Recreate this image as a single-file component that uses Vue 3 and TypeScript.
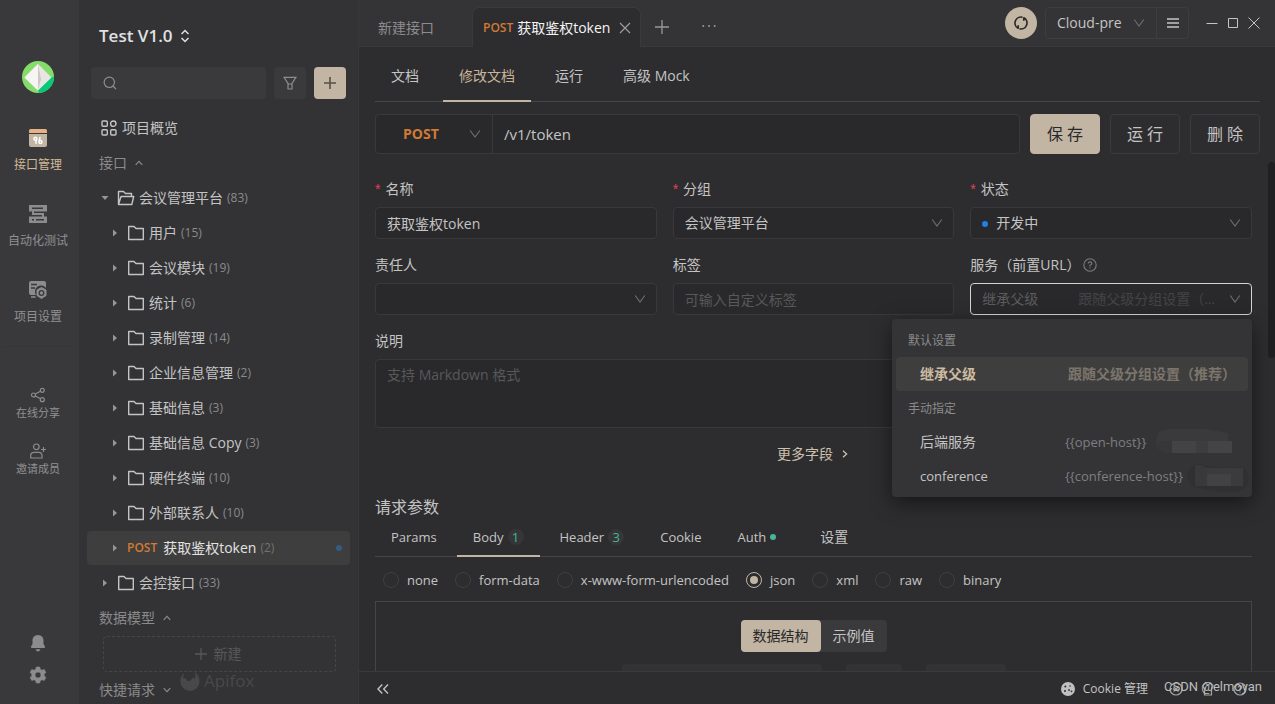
<script setup lang="ts">
import { ref } from 'vue'

interface TreeItem {
  name: string
  count: number
  level: number
  open?: boolean
  method?: string
}

const tree: TreeItem[] = [
  { name: '会议管理平台', count: 83, level: 0, open: true },
  { name: '用户', count: 15, level: 1 },
  { name: '会议模块', count: 19, level: 1 },
  { name: '统计', count: 6, level: 1 },
  { name: '录制管理', count: 14, level: 1 },
  { name: '企业信息管理', count: 2, level: 1 },
  { name: '基础信息', count: 3, level: 1 },
  { name: '基础信息 Copy', count: 3, level: 1 },
  { name: '硬件终端', count: 10, level: 1 },
  { name: '外部联系人', count: 10, level: 1 },
  { name: '获取鉴权token', count: 2, level: 1, method: 'POST' },
  { name: '会控接口', count: 33, level: 0 },
]

const pageTabs = ['文档', '修改文档', '运行', '高级 Mock']
const activePage = ref('修改文档')

interface ParamTab {
  name: string
  latin: boolean
  badge?: number
  dot?: boolean
}
const paramTabs: ParamTab[] = [
  { name: 'Params', latin: true },
  { name: 'Body', latin: true, badge: 1 },
  { name: 'Header', latin: true, badge: 3 },
  { name: 'Cookie', latin: true },
  { name: 'Auth', latin: true, dot: true },
  { name: '设置', latin: false },
]
const activeParam = ref('Body')

const bodyTypes = ['none', 'form-data', 'x-www-form-urlencoded', 'json', 'xml', 'raw', 'binary']
const bodyType = ref('json')

const path = ref('/v1/token')
const apiName = ref('获取鉴权token')
const tags = ref('')
const description = ref('')
const keyword = ref('')
const view = ref('数据结构')
</script>

<template>
  <div class="app">
    <nav class="rail" aria-label="主导航">
      <svg class="logo" viewBox="0 0 32 32" aria-hidden="true">
        <circle cx="16" cy="16" r="16" fill="#86dc6b" />
        <path d="M32 16A16 16 0 0 1 17 32L16 29.500L29.500 16Z" fill="#05c878" />
        <path d="M16 3L29.500 16.500L16 29.500L2.500 16.500Z" fill="#e8e6e4" />
        <path d="M16 3V29.500L2.500 16.500Z" fill="#f6f5f4" />
        <path d="M16 3L19 18L16 29.500Z" fill="#cdc8c4" />
      </svg>
      <button class="rail-item active" type="button">
        <svg width="18" height="18" viewBox="0 0 18 18" aria-hidden="true">
          <path d="M1.500 0H16.500Q18 0 18 1.500V4H0V1.500Q0 0 1.500 0Z" fill="#e6b184" />
          <path d="M0 5H18V16Q18 18 16 18H2Q0 18 0 16Z" fill="#c2b5a3" />
          <g fill="none" stroke="#fff" stroke-width="1.500" stroke-linecap="round">
            <circle cx="6.400" cy="9.800" r="1.500" /><path d="M7 11.300V14.300" />
            <circle cx="11.400" cy="12.900" r="1.500" /><path d="M10.200 11.900L11 8.500" />
          </g>
        </svg>
        <span>接口管理</span>
      </button>
      <button class="rail-item" type="button">
        <svg width="18" height="18" viewBox="0 0 18 18" aria-hidden="true">
          <path d="M0 0H18V6.500H5V8H15V11.500H18V18H0V11.500H13V10H3V6.500H0Z" fill="#8c8c8e" />
          <path d="M3 3.200H14M3 14.800H5M7 14.800H15" stroke="#39393b" stroke-width="1.600" />
        </svg>
        <span>自动化测试</span>
      </button>
      <button class="rail-item" type="button">
        <svg width="18" height="18" viewBox="0 0 18 18" aria-hidden="true">
          <path d="M2 0H15Q17 0 17 2V7A6 6 0 0 0 7 14H2Q0 14 0 12V2Q0 0 2 0Z" fill="#8c8c8e" />
          <path d="M2 3.500H8M2 7H6" stroke="#39393b" stroke-width="1.300" />
          <path d="M2 16H6.500" stroke="#8c8c8e" stroke-width="1.600" />
          <path d="M12.500 6.500L17 9V14.500L12.500 17.500L8 14.500V9Z" fill="#8c8c8e" stroke="#8c8c8e" stroke-width="1" stroke-linejoin="round" />
          <circle cx="12.500" cy="12" r="2.300" fill="none" stroke="#39393b" stroke-width="1.300" />
        </svg>
        <span>项目设置</span>
      </button>
      <hr class="rail-line" />
      <button class="rail-item small" type="button">
        <svg width="16" height="16" viewBox="0 0 16 16" fill="none" stroke="#8c8c8e" stroke-width="1.200" aria-hidden="true">
          <circle cx="3.500" cy="8" r="2" /><circle cx="12.300" cy="3.300" r="2" /><circle cx="12.300" cy="12.700" r="2" />
          <path d="M5.300 7L10.500 4.300M5.300 9L10.500 11.700" />
        </svg>
        <span>在线分享</span>
      </button>
      <button class="rail-item small" type="button">
        <svg width="16" height="16" viewBox="0 0 16 16" fill="none" stroke="#8c8c8e" stroke-width="1.200" aria-hidden="true">
          <circle cx="6.300" cy="3.800" r="2.800" />
          <path d="M.7 15V12.500Q.7 9.300 4 9.300H9Q12 9.300 12 12.500V15Z" /><path d="M13.500 4V9M11 6.500H16" />
        </svg>
        <span>邀请成员</span>
      </button>
      <div class="rail-bottom">
        <button class="bare" type="button" aria-label="通知">
          <svg width="16" height="18" viewBox="0 0 16 18" fill="#8c8c8e" aria-hidden="true">
            <path d="M8 1C4.300 1 2.500 3.800 2.500 6.500V10L1 12.500Q.6 14 2 14H14Q15.400 14 15 12.500L13.500 10V6.500C13.500 3.800 11.700 1 8 1Z" />
            <path d="M5.500 15.200H10.500Q9.500 17.500 8 17.500T5.500 15.200Z" />
          </svg>
        </button>
        <button class="bare" type="button" aria-label="设置">
          <svg width="18" height="18" viewBox="0 0 18 18" aria-hidden="true">
            <path fill="#8c8c8e" fill-rule="evenodd" d="M7.300 1H10.700L11.300 3.300L12.900 4.200L15.200 3.500L16.900 6.500L15.200 8.100V9.900L16.900 11.500L15.200 14.500L12.900 13.800L11.300 14.700L10.700 17H7.300L6.700 14.700L5.100 13.800L2.800 14.500L1.100 11.500L2.800 9.900V8.100L1.100 6.500L2.800 3.500L5.100 4.200L6.700 3.300ZM9 6A3 3 0 1 0 9 12A3 3 0 1 0 9 6Z" stroke="#8c8c8e" stroke-width=".6" stroke-linejoin="round" />
          </svg>
        </button>
      </div>
    </nav>

    <aside class="panel">
      <button class="project" type="button">
        <span>Test V1.0</span>
        <svg width="10" height="14" viewBox="0 0 10 14" fill="none" stroke="currentColor" stroke-width="1.500" aria-hidden="true">
          <path d="M1.500 5L5 1.500L8.500 5M1.500 9L5 12.500L8.500 9" />
        </svg>
      </button>
      <div class="search-row">
        <label class="search">
          <svg width="14" height="14" viewBox="0 0 14 14" fill="none" stroke="#8e8e90" stroke-width="1.200" aria-hidden="true">
            <circle cx="6.300" cy="6.300" r="5.200" /><path d="M10 10L13 13.200" />
          </svg>
          <input v-model="keyword" type="text" aria-label="搜索" />
        </label>
        <button class="square" type="button" aria-label="筛选">
          <svg width="14" height="14" viewBox="0 0 14 14" fill="none" stroke="#8e8e90" stroke-width="1.200" aria-hidden="true">
            <path d="M1 1.300H13L9 7.500V13H5V7.500ZM5 8H9" />
          </svg>
        </button>
        <button class="square primary" type="button" aria-label="新增">
          <svg width="14" height="14" viewBox="0 0 14 14" stroke="#55504a" stroke-width="1.600" aria-hidden="true"><path d="M7 1V13M1 7H13" /></svg>
        </button>
      </div>
      <a class="overview" href="#overview">
        <svg width="16" height="16" viewBox="0 0 16 16" fill="none" stroke="currentColor" stroke-width="1.400" aria-hidden="true">
          <rect x="1" y="1" width="5.300" height="5.300" rx="1" /><circle cx="12.300" cy="3.700" r="2.700" />
          <rect x="1" y="9.700" width="5.300" height="5.300" rx="1" /><rect x="9.700" y="9.700" width="5.300" height="5.300" rx="1" />
        </svg>
        <span>项目概览</span>
      </a>
      <button class="section" type="button">
        <span>接口</span>
        <svg width="8" height="6" viewBox="0 0 8 6" fill="none" stroke="currentColor" stroke-width="1.200" aria-hidden="true"><path d="M.7 4.800L4 1.400L7.300 4.800" /></svg>
      </button>
      <ul class="tree">
        <li
          v-for="item in tree"
          :key="item.name"
          class="node"
          :class="{ nested: item.level === 1, selected: item.method }"
        >
          <svg class="caret" :class="{ open: item.open }" width="8" height="8" viewBox="0 0 8 8" fill="#969698" aria-hidden="true"><path d="M2 .5L6 4L2 7.500Z" /></svg>
          <span v-if="item.method" class="method">{{ item.method }}</span>
          <svg v-else-if="item.open" class="folder" width="18" height="16" viewBox="0 0 18 16" fill="none" stroke="currentColor" stroke-width="1.400" stroke-linejoin="round" aria-hidden="true">
            <path d="M1.500 14.500V1.500H6.500L8.500 3.500H14.500V6M1.500 14.500L4 6.500H16.700L14.800 14.500Z" />
          </svg>
          <svg v-else class="folder" width="18" height="16" viewBox="0 0 18 16" fill="none" stroke="currentColor" stroke-width="1.400" stroke-linejoin="round" aria-hidden="true">
            <path d="M1.700 14.500V1.500H7L9 3.500H16.300V14.500Z" />
          </svg>
          <span class="node-name">{{ item.name }}</span>
          <span class="count">({{ item.count }})</span>
          <i v-if="item.method" class="unsaved"></i>
        </li>
      </ul>
      <button class="section" type="button">
        <span>数据模型</span>
        <svg width="8" height="6" viewBox="0 0 8 6" fill="none" stroke="currentColor" stroke-width="1.200" aria-hidden="true"><path d="M.7 4.800L4 1.400L7.300 4.800" /></svg>
      </button>
      <button class="create" type="button">
        <svg width="12" height="12" viewBox="0 0 12 12" stroke="currentColor" stroke-width="1.300" aria-hidden="true"><path d="M6 0V12M0 6H12" /></svg>
        <span>新建</span>
      </button>
      <button class="section" type="button">
        <span>快捷请求</span>
        <svg width="8" height="6" viewBox="0 0 8 6" fill="none" stroke="currentColor" stroke-width="1.200" aria-hidden="true"><path d="M.7 1.200L4 4.600L7.300 1.200" /></svg>
      </button>
      <div class="brand">
        <svg width="20" height="20" viewBox="0 0 20 20" fill="currentColor" aria-hidden="true">
          <path d="M4 2Q0 6 .5 11A9.500 9 0 0 0 19.500 11Q19.500 5 15 1Q16 5 14.500 8L12.500 6.500Q11 10 8.500 10Q6 10 6 7L3.500 8Q3 5 4 2Z" />
        </svg>
        <span>Apifox</span>
      </div>
    </aside>

    <main class="main">
      <header class="topbar">
        <button class="doc-tab" type="button">新建接口</button>
        <div class="doc-tab current">
          <span class="method">POST</span>
          <span class="doc-name">获取鉴权token</span>
          <button class="bare" type="button" aria-label="关闭标签">
            <svg width="12" height="12" viewBox="0 0 12 12" stroke="#9c9c9e" stroke-width="1.200" aria-hidden="true"><path d="M1 1L11 11M11 1L1 11" /></svg>
          </button>
        </div>
        <button class="bare add-tab" type="button" aria-label="新建标签">
          <svg width="14" height="14" viewBox="0 0 14 14" stroke="#98989a" stroke-width="1.300" aria-hidden="true"><path d="M7 0V14M0 7H14" /></svg>
        </button>
        <button class="bare" type="button" aria-label="更多标签">
          <svg width="14" height="4" viewBox="0 0 14 4" fill="#98989a" aria-hidden="true"><circle cx="1.300" cy="2" r="1" /><circle cx="7" cy="2" r="1" /><circle cx="12.700" cy="2" r="1" /></svg>
        </button>
        <div class="top-right">
          <button class="sync" type="button" aria-label="同步">
            <svg width="16" height="16" viewBox="0 0 16 16" fill="none" stroke="#2a2826" stroke-width="1.700" aria-hidden="true">
              <path d="M5 13.200A6 6 0 0 1 9.500 2.200M5.200 13.800V10.300M11 2.800A6 6 0 0 1 6.500 13.800M10.800 2.200V5.700" />
            </svg>
          </button>
          <div class="env">
            <span class="select-wrap env-select">
              <select aria-label="环境"><option>Cloud-pre</option></select>
              <svg class="arrow" width="12" height="8" viewBox="0 0 12 8" aria-hidden="true"><path d="M1.200 .5L6 7L10.800 .5" /></svg>
            </span>
            <button class="env-menu" type="button" aria-label="环境管理">
              <svg width="12" height="10" viewBox="0 0 12 10" stroke="#c4c4c4" stroke-width="1.300" aria-hidden="true"><path d="M0 1H12M0 5H12M0 9H12" /></svg>
            </button>
          </div>
          <div class="window-buttons">
            <button class="bare" type="button" aria-label="最小化"><svg width="12" height="12" viewBox="0 0 12 12" aria-hidden="true"><path d="M.5 6.500H11.500" /></svg></button>
            <button class="bare" type="button" aria-label="最大化"><svg width="12" height="12" viewBox="0 0 12 12" aria-hidden="true"><path d="M1.500 1.500H10.500V10.500H1.500Z" /></svg></button>
            <button class="bare" type="button" aria-label="关闭"><svg width="12" height="12" viewBox="0 0 12 12" aria-hidden="true"><path d="M.5 .5L11.500 11.500M11.500 .5L.5 11.500" /></svg></button>
          </div>
        </div>
      </header>

      <div class="page-head">
        <nav class="page-tabs">
          <button
            v-for="tab in pageTabs"
            :key="tab"
            type="button"
            :class="{ active: tab === activePage }"
            @click="activePage = tab"
          >{{ tab }}</button>
        </nav>
        <div class="request-row">
          <div class="request">
            <span class="select-wrap request-method">
              <select aria-label="请求方法"><option>POST</option></select>
              <svg class="arrow" width="12" height="8" viewBox="0 0 12 8" aria-hidden="true"><path d="M1.200 .5L6 7L10.800 .5" /></svg>
            </span>
            <input v-model="path" type="text" aria-label="接口路径" />
          </div>
          <button class="action primary" type="button">保 存</button>
          <button class="action" type="button">运 行</button>
          <button class="action" type="button">删 除</button>
        </div>
      </div>

      <div class="scroll">
        <i class="scrollbar"></i>
        <form class="form" @submit.prevent>
          <div class="field">
            <label for="f-name"><em>*</em>名称</label>
            <input id="f-name" v-model="apiName" type="text" />
          </div>
          <div class="field">
            <label for="f-group"><em>*</em>分组</label>
            <span class="select-wrap">
              <select id="f-group"><option>会议管理平台</option></select>
              <svg class="arrow" width="12" height="8" viewBox="0 0 12 8" aria-hidden="true"><path d="M1.200 .5L6 7L10.800 .5" /></svg>
            </span>
          </div>
          <div class="field">
            <label for="f-status"><em>*</em>状态</label>
            <span class="select-wrap status">
              <i class="status-dot"></i>
              <select id="f-status"><option>开发中</option></select>
              <svg class="arrow" width="12" height="8" viewBox="0 0 12 8" aria-hidden="true"><path d="M1.200 .5L6 7L10.800 .5" /></svg>
            </span>
          </div>
          <div class="field">
            <label for="f-owner">责任人</label>
            <span class="select-wrap">
              <select id="f-owner"><option></option></select>
              <svg class="arrow" width="12" height="8" viewBox="0 0 12 8" aria-hidden="true"><path d="M1.200 .5L6 7L10.800 .5" /></svg>
            </span>
          </div>
          <div class="field">
            <label for="f-tags">标签</label>
            <input id="f-tags" v-model="tags" type="text" placeholder="可输入自定义标签" />
          </div>
          <div class="field">
            <label for="f-service">服务（前置URL）
              <svg class="help" width="14" height="14" viewBox="0 0 14 14" fill="none" stroke="#7c7c7e" stroke-width="1.100" aria-hidden="true">
                <circle cx="7" cy="7" r="6.200" /><path d="M5.200 5.600Q5.200 3.900 7 3.900T8.800 5.500Q8.800 6.500 7 7.300V8.500M7 9.400V10.500" />
              </svg>
            </label>
            <div class="service">
              <button id="f-service" class="service-box" type="button" role="combobox" aria-expanded="true" aria-controls="service-menu">
                <span class="service-name">继承父级</span>
                <span class="service-hint">跟随父级分组设置（推荐）</span>
                <svg class="chev" width="12" height="8" viewBox="0 0 12 8" aria-hidden="true"><path d="M1.200 .5L6 7L10.800 .5" /></svg>
              </button>
              <div id="service-menu" class="menu" role="listbox">
                <div class="menu-group">默认设置</div>
                <div class="option chosen" role="option" aria-selected="true"><span>继承父级</span><small>跟随父级分组设置（推荐）</small></div>
                <div class="menu-group">手动指定</div>
                <div class="option" role="option" aria-selected="false">
                  <span>后端服务</span><small v-pre class="latin">{{open-host}}</small>
                  <svg class="mosaic" width="78" height="24" viewBox="0 0 78 24" aria-hidden="true">
                    <path d="M12 0H50L72 4V24H12Q0 23 0 12T12 0Z" fill="#3a3a3c" />
                    <path d="M0 12H16V24H10Q1 22 0 12Z" fill="#373739" />
                    <path d="M16 12H40V24H16Z" fill="#434345" /><path d="M40 12H52V24H40Z" fill="#3d3d3f" /><path d="M52 12H76V24H52Z" fill="#444446" />
                  </svg>
                </div>
                <div class="option" role="option" aria-selected="false">
                  <span class="latin">conference</span><small v-pre class="latin">{{conference-host}}</small>
                  <svg class="mosaic" width="62" height="30" viewBox="0 0 62 30" aria-hidden="true">
                    <path d="M0 12Q2 2 14 1Q22 6 52 4Q62 6 62 16Q60 30 42 29Q16 28 4 22Z" fill="#303032" />
                    <path d="M8 2H14Q20 5 20 5V23H8Z" fill="#39393b" /><path d="M20 5H56V23H20Z" fill="#3b3b3d" /><path d="M20 11H44V23H20Z" fill="#424244" />
                  </svg>
                </div>
              </div>
            </div>
          </div>
          <div class="field wide">
            <label for="f-desc">说明</label>
            <textarea id="f-desc" v-model="description" placeholder="支持 Markdown 格式"></textarea>
          </div>
        </form>

        <button class="more" type="button">
          <span>更多字段</span>
          <svg width="6" height="8" viewBox="0 0 6 8" fill="none" stroke="currentColor" stroke-width="1.300" aria-hidden="true"><path d="M1 .8L4.600 4L1 7.200" /></svg>
        </button>

        <h2>请求参数</h2>
        <nav class="param-tabs">
          <button
            v-for="tab in paramTabs"
            :key="tab.name"
            type="button"
            :class="{ active: tab.name === activeParam, latin: tab.latin }"
            @click="activeParam = tab.name"
          >
            <span>{{ tab.name }}</span>
            <b v-if="tab.badge">{{ tab.badge }}</b>
            <i v-if="tab.dot"></i>
          </button>
        </nav>
        <div class="radios" role="radiogroup" aria-label="Body">
          <label v-for="type in bodyTypes" :key="type" class="latin">
            <input v-model="bodyType" type="radio" name="body-type" :value="type" />
            <span>{{ type }}</span>
          </label>
        </div>
        <section class="schema">
          <div class="segmented">
            <button v-for="v in ['数据结构', '示例值']" :key="v" type="button" :class="{ on: v === view }" @click="view = v">{{ v }}</button>
          </div>
          <div class="ghosts"><i class="g1"></i><i class="g2"></i><i class="g3"></i></div>
        </section>
      </div>

      <footer class="statusbar">
        <button class="bare" type="button" aria-label="收起侧栏">
          <svg width="12" height="10" viewBox="0 0 12 10" fill="none" stroke="#c0c0c0" stroke-width="1.400" aria-hidden="true"><path d="M5.300 .5L1 5L5.300 9.500M11 .5L6.700 5L11 9.500" /></svg>
        </button>
        <div class="status-right">
          <button class="cookie" type="button">
            <svg width="14" height="14" viewBox="0 0 14 14" aria-hidden="true">
              <circle cx="7" cy="7" r="7" fill="#c0c0c0" />
              <g fill="#2d2d2f"><circle cx="4.300" cy="4.500" r="1" /><circle cx="9" cy="4" r=".8" /><circle cx="4" cy="9" r="1" /><circle cx="8" cy="8" r=".9" /><circle cx="10.500" cy="9.300" r=".9" /></g>
            </svg>
            <span>Cookie 管理</span>
          </button>
          <div class="tools">
            <button class="bare" type="button" aria-label="运行环境">
              <svg width="14" height="14" viewBox="0 0 14 14" fill="none" stroke="#a4a4a4" stroke-width="1.200" aria-hidden="true"><circle cx="7" cy="7" r="6" /><path d="M4.500 4.500L9.500 9.500M9.500 4.500L4.500 9.500" /></svg>
            </button>
            <button class="bare" type="button" aria-label="主题">
              <svg width="14" height="14" viewBox="0 0 14 14" fill="none" stroke="#a4a4a4" stroke-width="1.200" aria-hidden="true"><path d="M4.500 1L2 3.500L2.500 6H3.500V13H10.500V6H11.500L12 3.500L9.500 1Q7 4 4.500 1Z" /></svg>
            </button>
            <button class="bare" type="button" aria-label="帮助">
              <svg width="14" height="14" viewBox="0 0 14 14" fill="none" stroke="#a4a4a4" stroke-width="1.200" aria-hidden="true"><circle cx="7" cy="7" r="6" /><path d="M5.200 5.600Q5.200 3.900 7 3.900T8.800 5.500Q8.800 6.500 7 7.300V8.500M7 9.400V10.500" /></svg>
            </button>
            <span class="signature">CSDN @elmoyan</span>
          </div>
        </div>
      </footer>
    </main>
  </div>
</template>

<style>
body {
  margin: 0;
  background: #2d2d2f;
}
</style>

<style scoped>
.app {
  display: flex;
  height: 100vh;
  overflow: hidden;
  font: 14px/22px "Open Sans", "Noto Sans CJK SC", sans-serif;
  color: #c4c4c4;
  background: #2d2d2f;
}
.app *,
.app *::before {
  box-sizing: border-box;
}
button,
input,
select,
textarea {
  font: inherit;
  color: inherit;
  margin: 0;
  outline: none;
}
button {
  padding: 0;
  border: 0;
  background: none;
  cursor: pointer;
}
svg {
  display: block;
  flex: none;
}
.bare {
  display: flex;
}

/* icon rail */
.rail {
  flex: 0 0 79px;
  display: flex;
  flex-direction: column;
  align-items: center;
  padding: 61px 3px 20px 0;
  background: #39393b;
}
.logo {
  width: 32px;
  height: 32px;
  margin-bottom: 36px;
}
.rail-item {
  display: flex;
  flex-direction: column;
  align-items: center;
  gap: 9px;
  height: 76px;
  font-size: 12px;
  line-height: 18px;
  color: #909092;
  white-space: nowrap;
}
.rail-item.active {
  color: #d2b89a;
}
.rail-item.small {
  height: 56px;
  gap: 1px;
  font-size: 11px;
}
.rail-line {
  width: 70px;
  height: 1px;
  margin: -11px 0 40px;
  border: 0;
  background: #363638;
}
.rail-bottom {
  margin-top: auto;
  display: flex;
  flex-direction: column;
  align-items: center;
  gap: 14px;
}

/* side panel */
.panel {
  position: relative;
  flex: 0 0 280px;
  display: flex;
  flex-direction: column;
  padding-top: 22px;
  background: #333335;
  border-right: 1px solid #38383a;
  overflow: hidden;
}
.project {
  display: flex;
  align-items: center;
  gap: 7px;
  margin: 0 20px 18px;
  font-size: 17px;
  font-weight: 600;
  line-height: 27px;
  color: #e0e0e0;
}
.search-row {
  display: flex;
  gap: 8px;
  margin: 0 12px 18px;
}
.search {
  flex: 1;
  display: flex;
  align-items: center;
  gap: 8px;
  height: 32px;
  padding: 0 12px;
  border-radius: 4px;
  background: #3a3a3c;
}
.search input {
  flex: 1;
  width: 0;
  border: 0;
  background: none;
}
.square {
  display: grid;
  place-items: center;
  width: 32px;
  height: 32px;
  border-radius: 4px;
  background: #3a3a3c;
}
.primary {
  background: #c2b5a3;
}
.overview {
  display: flex;
  align-items: center;
  gap: 5px;
  margin: 0 22px 13px;
  color: #c4c4c4;
  text-decoration: none;
}
.section {
  display: flex;
  align-items: center;
  gap: 8px;
  margin: 0 20px;
  color: #8a8a8c;
}
.tree {
  margin: 7px 8px 6px;
  padding: 0;
  list-style: none;
}
.node {
  display: flex;
  align-items: center;
  height: 34px;
  margin-bottom: 1px;
  padding-left: 14px;
  border-radius: 4px;
  white-space: nowrap;
}
.node.nested {
  padding-left: 24px;
}
.node.selected {
  background: #3e3e3e;
  color: #e2e2e2;
}
.caret {
  margin-right: 8px;
}
.caret.open {
  transform: rotate(90deg);
}
.folder {
  margin-right: 4px;
}
.method {
  font-size: 12px;
  font-weight: 600;
  color: #d07a35;
}
.node .method {
  margin-right: 6px;
}
.count {
  margin-left: 4px;
  font-size: 12px;
  color: #8a8a8c;
}
.selected .count {
  color: #77706a;
}
.unsaved {
  width: 6px;
  height: 6px;
  margin: 0 8px 0 auto;
  border-radius: 50%;
  background: #375a80;
}
.create {
  display: flex;
  align-items: center;
  justify-content: center;
  gap: 7px;
  height: 36px;
  margin: 7px 22px 7px 24px;
  padding-right: 3px;
  border: 1px dashed #464648;
  border-radius: 4px;
  color: #58585a;
}
.brand {
  position: absolute;
  left: 101px;
  bottom: 11px;
  display: flex;
  align-items: center;
  gap: 4px;
  font-size: 17px;
  line-height: 24px;
  color: #48484a;
}

/* main column */
.main {
  flex: 1;
  min-width: 0;
  display: flex;
  flex-direction: column;
}
.topbar {
  display: flex;
  align-items: center;
  height: 47px;
  flex: none;
  background: #343436;
  border-bottom: 1px solid #3a3a3c;
}
.doc-tab {
  width: 113px;
  padding: 10px 0 0 19px;
  text-align: left;
  color: #8c8c8e;
}
.doc-tab.current {
  display: flex;
  align-items: center;
  align-self: flex-end;
  width: auto;
  height: 40px;
  margin-bottom: -1px;
  padding: 1px 9px 0 10px;
  border: 1px solid #3a3a3c;
  border-bottom: 0;
  border-radius: 7px 7px 0 0;
  background: #2d2d2f;
}
.doc-name {
  margin: 0 9px 0 4px;
  color: #f4f4f4;
}
.add-tab {
  margin: 8px 33px 0 14px;
}
.add-tab + .bare {
  margin-top: 6px;
}
.top-right {
  margin-left: auto;
  display: flex;
  align-items: center;
  padding-right: 15px;
}
.sync {
  display: grid;
  place-items: center;
  width: 32px;
  height: 32px;
  border-radius: 50%;
  background: #c2b5a3;
}
.env {
  display: flex;
  margin: 0 17px 0 8px;
  border: 1px solid #3e3e40;
  border-radius: 4px;
}
.env-menu {
  display: grid;
  place-items: center;
  width: 32px;
  height: 30px;
  border-left: 1px solid #3e3e40;
}
.window-buttons {
  display: flex;
  gap: 9px;
}
.window-buttons svg {
  fill: none;
  stroke: #c4c4c4;
}

.select-wrap {
  position: relative;
  display: block;
}
.select-wrap select {
  display: block;
  width: 100%;
  height: 32px;
  padding: 0 30px 0 11px;
  appearance: none;
  border: 1px solid #39393b;
  border-radius: 4px;
  background: #29292b;
}
.arrow {
  position: absolute;
  right: 11px;
  top: 50%;
  margin-top: -4px;
  pointer-events: none;
}
.arrow path,
.chev path {
  fill: none;
  stroke: #6c6c6e;
  stroke-width: 1.2;
}
.env-select {
  width: 110px;
}
.env-select select {
  height: 30px;
  border: 0;
  background: none;
}

.page-head {
  flex: none;
  padding: 0 15px 8px 16px;
}
.page-tabs {
  display: flex;
  gap: 8px;
  margin-bottom: 12px;
  box-shadow: inset 0 -1px #464648;
}
.page-tabs button {
  padding: 18px 16px 13px;
  border-bottom: 2px solid transparent;
}
.page-tabs .active {
  color: #c8b597;
  border-color: #c2b5a3;
}
.request-row {
  display: flex;
  gap: 10px;
}
.request {
  flex: 1;
  display: flex;
  height: 40px;
  border: 1px solid #39393b;
  border-radius: 4px;
  background: #29292b;
}
.request-method {
  width: 117px;
  border-right: 1px solid #39393b;
}
.request-method select {
  height: 38px;
  padding-left: 27px;
  border: 0;
  background: none;
  font-weight: 700;
  color: #d07a35;
}
.request input {
  flex: 1;
  min-width: 0;
  padding: 0 11px;
  border: 0;
  background: none;
  font-size: 15px;
}
.action {
  width: 70px;
  height: 40px;
  border: 1px solid #3b3b3d;
  border-radius: 4px;
  font-size: 16px;
}
.action.primary {
  border-color: #c2b5a3;
  color: #29292b;
}

/* scrolling content */
.scroll {
  position: relative;
  flex: 1;
  min-height: 0;
  overflow: hidden;
  padding: 16px 23px 0 16px;
}
.scrollbar {
  position: absolute;
  right: 0;
  top: 0;
  width: 7px;
  height: 196px;
  border-radius: 4px;
  background: #202022;
}
.form {
  display: grid;
  grid-template-columns: repeat(3, minmax(0, 1fr));
  gap: 15px 16px;
}
.field label {
  display: flex;
  align-items: center;
  margin-bottom: 7px;
  line-height: 22px;
}
.field em {
  margin-right: 5px;
  font: 14px/22px "Liberation Sans", sans-serif;
  color: #e0405e;
}
.field input,
.field textarea {
  display: block;
  width: 100%;
  height: 32px;
  padding: 0 11px;
  border: 1px solid #39393b;
  border-radius: 4px;
  background: #29292b;
}
.field textarea {
  height: 69px;
  padding-top: 4px;
  resize: none;
}
.wide {
  grid-column: 1 / -1;
}
::placeholder {
  color: #58585a;
  opacity: 1;
}
.help {
  margin-left: 3px;
}
.status select {
  padding-left: 25px;
}
.status-dot {
  position: absolute;
  left: 12px;
  top: 14px;
  width: 6px;
  height: 6px;
  border-radius: 50%;
  background: #1c82e4;
}
.service {
  position: relative;
}
.service-box {
  display: flex;
  align-items: center;
  width: 100%;
  height: 32px;
  padding: 0 10px 0 11px;
  border: 1px solid #d6d2cc;
  border-radius: 4px;
  background: #29292b;
  text-align: left;
  color: #5c5c5e;
}
.service-name {
  flex: 0 0 96px;
}
.service-hint {
  flex: 1;
  margin-right: 12px;
  overflow: hidden;
  text-overflow: ellipsis;
  white-space: nowrap;
  color: #444446;
}
.menu {
  position: absolute;
  z-index: 5;
  right: 0;
  top: 36px;
  width: 360px;
  padding: 4px;
  border-radius: 4px;
  background: #343436;
  box-shadow: 0 6px 20px rgba(0, 0, 0, 0.5);
}
.menu-group {
  padding: 1px 12px 0;
  font-size: 12px;
  line-height: 33px;
  color: #8a8a8c;
}
.option {
  position: relative;
  display: flex;
  align-items: center;
  height: 34px;
  padding: 0 8px 0 24px;
  border-radius: 4px;
  white-space: nowrap;
}
.option span {
  flex: 0 0 145px;
}
.option small {
  font-size: 14px;
  color: #7e7e80;
}
.option.chosen {
  background: #3e3e3e;
  font-weight: 700;
  color: #cdbba2;
}
.option.chosen span {
  flex-basis: 148px;
}
.chosen small {
  color: #7c756c;
}
.mosaic {
  position: absolute;
  right: 14px;
  top: 4px;
}
.option:last-child .mosaic {
  right: -1px;
}

.more {
  display: flex;
  align-items: center;
  gap: 9px;
  margin: 15px auto 30px;
  padding-right: 2px;
  color: #cdc0ae;
}
h2 {
  margin: 0;
  font-size: 16px;
  font-weight: 400;
  line-height: 24px;
}
.param-tabs {
  display: flex;
  gap: 4px;
  margin-bottom: 12px;
  box-shadow: inset 0 -1px #464648;
}
.param-tabs button {
  display: flex;
  align-items: center;
  gap: 4px;
  padding: 7px 16px;
  border-bottom: 2px solid transparent;
}
.param-tabs .active {
  border-color: #c2b5a3;
}
.latin,
.option .latin {
  font-size: 13px;
}
.param-tabs b {
  width: 16px;
  height: 16px;
  border-radius: 50%;
  background: #363638;
  font-weight: 400;
  line-height: 16px;
  color: #45b795;
}
.param-tabs i {
  width: 6px;
  height: 6px;
  margin-right: 8px;
  border-radius: 50%;
  background: #45b795;
}
.radios {
  display: flex;
  gap: 17px;
  margin-bottom: 10px;
  padding-left: 8px;
}
.radios label {
  display: flex;
  align-items: center;
  gap: 8px;
}
.radios input {
  display: grid;
  place-items: center;
  width: 16px;
  height: 16px;
  appearance: none;
  border: 1px solid #3f3f41;
  border-radius: 50%;
}
.radios input:checked {
  border-color: #c2b5a3;
}
.radios input:checked::before {
  content: "";
  width: 8px;
  height: 8px;
  border-radius: 50%;
  background: #c2b5a3;
}
.schema {
  height: 300px;
  padding-top: 18px;
  border: 1px solid #454547;
}
.segmented {
  display: flex;
  width: max-content;
  margin: 0 auto 12px;
  border-radius: 4px;
  background: #3a3a3c;
}
.segmented button {
  height: 32px;
  padding: 0 12px;
  border-radius: 4px;
}
.segmented .on {
  background: #c2b5a3;
  color: #29292b;
}
.ghosts {
  display: flex;
  justify-content: center;
  gap: 24px;
}
.ghosts i {
  height: 28px;
  border-radius: 4px;
  background: #333333;
}
.g1 {
  width: 200px;
}
.g2 {
  width: 56px;
}
.g3 {
  width: 80px;
}

.statusbar {
  display: flex;
  align-items: center;
  justify-content: space-between;
  flex: none;
  height: 33px;
  padding: 2px 16px 0 18px;
  border-top: 1px solid #3a3a3c;
}
.status-right,
.cookie {
  display: flex;
  align-items: center;
}
.cookie {
  gap: 8px;
  margin-right: 21px;
  font-size: 12px;
}
.tools {
  position: relative;
  display: flex;
  gap: 18px;
  padding-right: 12px;
}
.signature {
  position: absolute;
  left: -5px;
  top: -5px;
  font: 13px/20px Roboto, sans-serif;
  white-space: nowrap;
  color: #bdbdbd;
}
</style>
